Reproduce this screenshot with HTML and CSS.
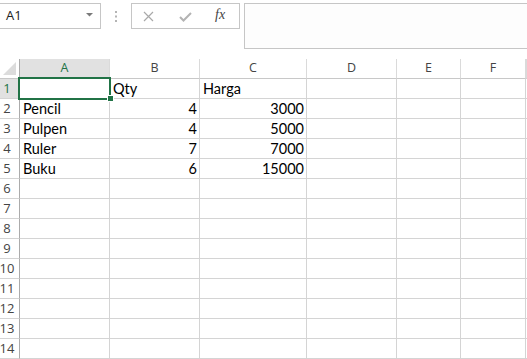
FILE: index.html
```html
<!DOCTYPE html>
<html>
<head>
<meta charset="utf-8">
<link rel="stylesheet" href="styles.css">
</head>
<body>
<div class="app">
  <div class="toolbar">
    <div class="namebox">
      <span class="ref">A1</span>
      <svg class="drop" width="7" height="4" viewBox="0 0 7 4"><polygon points="0,0 7,0 3.5,3.5" fill="#7a7a7a"/></svg>
    </div>
    <div class="dots">
      <svg width="2" height="11" viewBox="0 0 2 11"><rect x="0" y="0" width="2" height="2" fill="#b4b4b4"/><rect x="0" y="4.5" width="2" height="2" fill="#b4b4b4"/><rect x="0" y="9" width="2" height="2" fill="#b4b4b4"/></svg>
    </div>
    <div class="fxbtns">
      <svg class="ico-x" width="11" height="11" viewBox="0 0 11 11"><path d="M1 1 L10 10 M10 1 L1 10" stroke="#a9a9a9" stroke-width="1.2" fill="none"/></svg>
      <svg class="ico-ok" width="13" height="10" viewBox="0 0 13 10"><path d="M1 5 L4.5 8.5 L12 1" stroke="#b3b3b3" stroke-width="2" fill="none"/></svg>
      <span class="fx">fx</span>
    </div>
    <div class="formula"></div>
  </div>

  <div class="sheet">
    <div class="row head">
      <div class="c corner"><svg width="19" height="19" viewBox="0 0 19 19"><polygon points="16,3 16,16 3,16" fill="#dcdcdc"/></svg></div>
      <div class="c ch sel">A</div>
      <div class="c ch">B</div>
      <div class="c ch">C</div>
      <div class="c ch">D</div>
      <div class="c ch">E</div>
      <div class="c ch">F</div>
      <div class="c ch"></div>
    </div>
    <div class="row">
      <div class="c rh sel">1</div><div class="c"></div><div class="c">Qty</div><div class="c">Harga</div><div class="c"></div><div class="c"></div><div class="c"></div><div class="c"></div>
    </div>
    <div class="row">
      <div class="c rh">2</div><div class="c">Pencil</div><div class="c num">4</div><div class="c num">3000</div><div class="c"></div><div class="c"></div><div class="c"></div><div class="c"></div>
    </div>
    <div class="row">
      <div class="c rh">3</div><div class="c">Pulpen</div><div class="c num">4</div><div class="c num">5000</div><div class="c"></div><div class="c"></div><div class="c"></div><div class="c"></div>
    </div>
    <div class="row">
      <div class="c rh">4</div><div class="c">Ruler</div><div class="c num">7</div><div class="c num">7000</div><div class="c"></div><div class="c"></div><div class="c"></div><div class="c"></div>
    </div>
    <div class="row">
      <div class="c rh">5</div><div class="c">Buku</div><div class="c num">6</div><div class="c num">15000</div><div class="c"></div><div class="c"></div><div class="c"></div><div class="c"></div>
    </div>
    <div class="row">
      <div class="c rh">6</div><div class="c"></div><div class="c"></div><div class="c"></div><div class="c"></div><div class="c"></div><div class="c"></div><div class="c"></div>
    </div>
    <div class="row">
      <div class="c rh">7</div><div class="c"></div><div class="c"></div><div class="c"></div><div class="c"></div><div class="c"></div><div class="c"></div><div class="c"></div>
    </div>
    <div class="row">
      <div class="c rh">8</div><div class="c"></div><div class="c"></div><div class="c"></div><div class="c"></div><div class="c"></div><div class="c"></div><div class="c"></div>
    </div>
    <div class="row">
      <div class="c rh">9</div><div class="c"></div><div class="c"></div><div class="c"></div><div class="c"></div><div class="c"></div><div class="c"></div><div class="c"></div>
    </div>
    <div class="row">
      <div class="c rh">10</div><div class="c"></div><div class="c"></div><div class="c"></div><div class="c"></div><div class="c"></div><div class="c"></div><div class="c"></div>
    </div>
    <div class="row">
      <div class="c rh">11</div><div class="c"></div><div class="c"></div><div class="c"></div><div class="c"></div><div class="c"></div><div class="c"></div><div class="c"></div>
    </div>
    <div class="row">
      <div class="c rh">12</div><div class="c"></div><div class="c"></div><div class="c"></div><div class="c"></div><div class="c"></div><div class="c"></div><div class="c"></div>
    </div>
    <div class="row">
      <div class="c rh">13</div><div class="c"></div><div class="c"></div><div class="c"></div><div class="c"></div><div class="c"></div><div class="c"></div><div class="c"></div>
    </div>
    <div class="row">
      <div class="c rh">14</div><div class="c"></div><div class="c"></div><div class="c"></div><div class="c"></div><div class="c"></div><div class="c"></div><div class="c"></div>
    </div>

    <div class="selection"></div>
    <div class="handle"></div>
  </div>
</div>
</body>
</html>
```

FILE: styles.css
```css
* { box-sizing: border-box; }
html, body { margin: 0; padding: 0; background: #fff; overflow: hidden; }
.app { width: 527px; height: 359px; overflow: hidden; font-family: "Open Sans", "Noto Sans", sans-serif; }

.toolbar {
  height: 59px;
  display: flex;
  align-items: flex-start;
  padding-top: 3px;
}
.namebox {
  margin-left: -1px;
  width: 102px;
  height: 26px;
  border: 1px solid #c6c6c6;
  display: flex;
  align-items: center;
  justify-content: space-between;
  padding: 0 7px 1px 6px;
}
.ref { font-size: 13px; color: #222; line-height: 1; }
.drop { margin-top: -1px; }
.dots {
  width: 30px;
  height: 26px;
  display: flex;
  align-items: center;
  justify-content: center;
  padding-top: 1px;
}
.fxbtns {
  width: 109px;
  height: 26px;
  border: 1px solid #c6c6c6;
  display: flex;
  align-items: center;
  padding-left: 11px;
}
.ico-x { margin-top: 1px; }
.ico-ok { margin-left: 25px; margin-top: 1px; }
.fx {
  margin-left: 23px;
  font-family: "Liberation Serif", "DejaVu Serif", serif;
  font-style: italic;
  font-size: 14px;
  color: #444;
  line-height: 1;
  margin-top: -2px;
}
.formula {
  margin-left: 4px;
  margin-right: -2px;
  flex: 1;
  height: 46px;
  border: 1px solid #c6c6c6;
  background: #fdfdfd;
}

.sheet { position: relative; }
.row {
  display: grid;
  grid-template-columns: 20px 90px 90px 107px 90px 64px 65px 1fr;
  height: 20px;
}
.c {
  border-right: 1px solid #d4d4d4;
  border-bottom: 1px solid #d4d4d4;
  height: 20px;
  display: flex;
  align-items: flex-end;
  padding: 0 3px 2px 3px;
  font-family: Lato, "Liberation Sans", sans-serif;
  font-size: 14.5px;
  color: #000;
  line-height: 1;
  white-space: nowrap;
  overflow: visible;
}
.num { justify-content: flex-end; padding-right: 2px; }

.head .c {
  border-bottom-color: #c8c8c8;
  border-right-color: #dadada;
}
.corner { padding: 0; border-right-color: #ababab !important; }
.corner svg { display: block; }
.ch {
  justify-content: center;
  align-items: center;
  padding: 0 0 1px 0;
  font-family: "Open Sans", "Noto Sans", sans-serif;
  font-size: 12.5px;
  color: #444;
}
.ch.sel { background: #e1e1e1; color: #217346; }
.rh {
  border-right-color: #ababab;
  justify-content: center;
  align-items: center;
  padding: 0 5px 1px 0;
  font-family: "Open Sans", "Noto Sans", sans-serif;
  font-size: 13px;
  color: #444;
  overflow: visible;
}
.rh.sel { background: #e1e1e1; color: #217346; }

.selection {
  position: absolute;
  left: 18px;
  top: 18px;
  width: 93px;
  height: 23px;
  border: 2px solid #217346;
}
.handle {
  position: absolute;
  left: 108px;
  top: 37px;
  width: 5px;
  height: 5px;
  background: #217346;
  box-shadow: 0 0 0 1px #fff;
}
```
